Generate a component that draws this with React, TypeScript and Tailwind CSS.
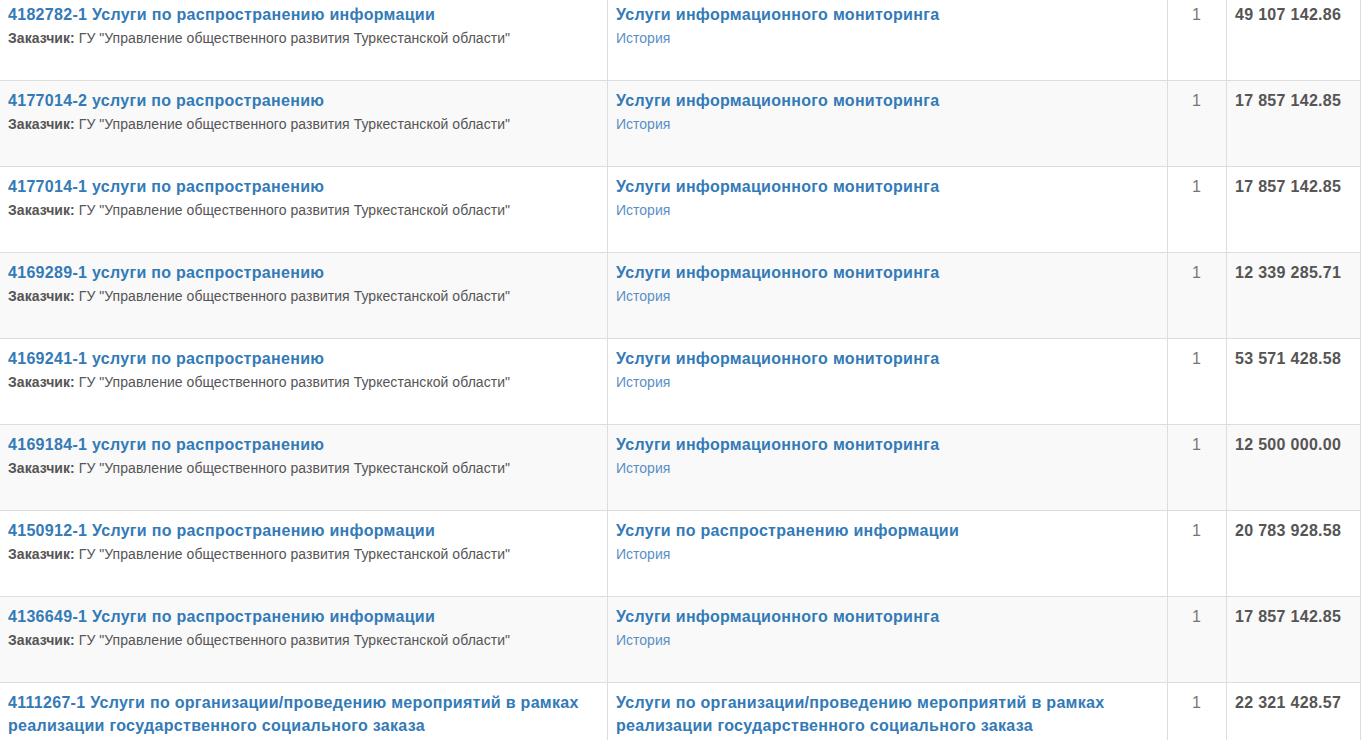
import React from "react";

type Row = { id: string; title: string; cat: string; qty: string; sum: string };

const rows: Row[] = [
  { id: "4182782-1", title: "Услуги по распространению информации", cat: "Услуги информационного мониторинга", qty: "1", sum: "49 107 142.86" },
  { id: "4177014-2", title: "услуги по распространению", cat: "Услуги информационного мониторинга", qty: "1", sum: "17 857 142.85" },
  { id: "4177014-1", title: "услуги по распространению", cat: "Услуги информационного мониторинга", qty: "1", sum: "17 857 142.85" },
  { id: "4169289-1", title: "услуги по распространению", cat: "Услуги информационного мониторинга", qty: "1", sum: "12 339 285.71" },
  { id: "4169241-1", title: "услуги по распространению", cat: "Услуги информационного мониторинга", qty: "1", sum: "53 571 428.58" },
  { id: "4169184-1", title: "услуги по распространению", cat: "Услуги информационного мониторинга", qty: "1", sum: "12 500 000.00" },
  { id: "4150912-1", title: "Услуги по распространению информации", cat: "Услуги по распространению информации", qty: "1", sum: "20 783 928.58" },
  { id: "4136649-1", title: "Услуги по распространению информации", cat: "Услуги информационного мониторинга", qty: "1", sum: "17 857 142.85" },
];

function Cells({ row, last }: { row: Row; last?: boolean }) {
  return (
    <>
      <div className="border-r border-[#ddd] px-2 pt-2">
        <a className="block text-[16px] leading-[23px] font-bold tracking-[0.3px] text-[#337ab7]" href="#">
          {row.id} {row.title}
        </a>
        {!last && (
          <div className="mt-[2px] text-[14px] leading-[20px] tracking-[0.05px] text-[#555]">
            <b>Заказчик:</b> ГУ "Управление общественного развития Туркестанской области"
          </div>
        )}
      </div>
      <div className="border-r border-[#ddd] px-2 pt-2">
        <a className="block text-[16px] leading-[23px] font-bold tracking-[0.3px] text-[#337ab7]" href="#">
          {row.cat}
        </a>
        {!last && <div className="mt-[2px] text-[14px] leading-[20px] text-[#5a8fc4]">История</div>}
      </div>
      <div className="border-r border-[#ddd] pt-2 pr-px text-center text-[16px] leading-[23px] text-[#777]">
        {row.qty}
      </div>
      <div className="border-r border-[#ddd] px-2 pt-2 text-[16px] leading-[23px] font-bold tracking-[0.3px] text-[#555]">
        {row.sum}
      </div>
    </>
  );
}

export default function App() {
  const lastRow: Row = {
    id: "4111267-1",
    title: "Услуги по организации/проведению мероприятий в рамках реализации государственного социального заказа",
    cat: "Услуги по организации/проведению мероприятий в рамках реализации государственного социального заказа",
    qty: "1",
    sum: "22 321 428.57",
  };
  return (
    <div className="h-[740px] w-[1361px] overflow-hidden bg-white font-['Liberation_Sans',Arial,sans-serif]">
      <div className="-mt-[6px]">
        {rows.map((r, i) => (
          <div
            key={r.id}
            className={`grid h-[86px] grid-cols-[608px_560px_59px_134px] border-t border-[#ddd] ${i % 2 === 1 ? "bg-[#f9f9f9]" : "bg-white"}`}
          >
            <Cells row={r} />
          </div>
        ))}
        <div className="grid h-[86px] grid-cols-[608px_560px_59px_134px] border-t border-[#ddd] bg-white">
          <Cells row={lastRow} last />
        </div>
      </div>
    </div>
  );
}
